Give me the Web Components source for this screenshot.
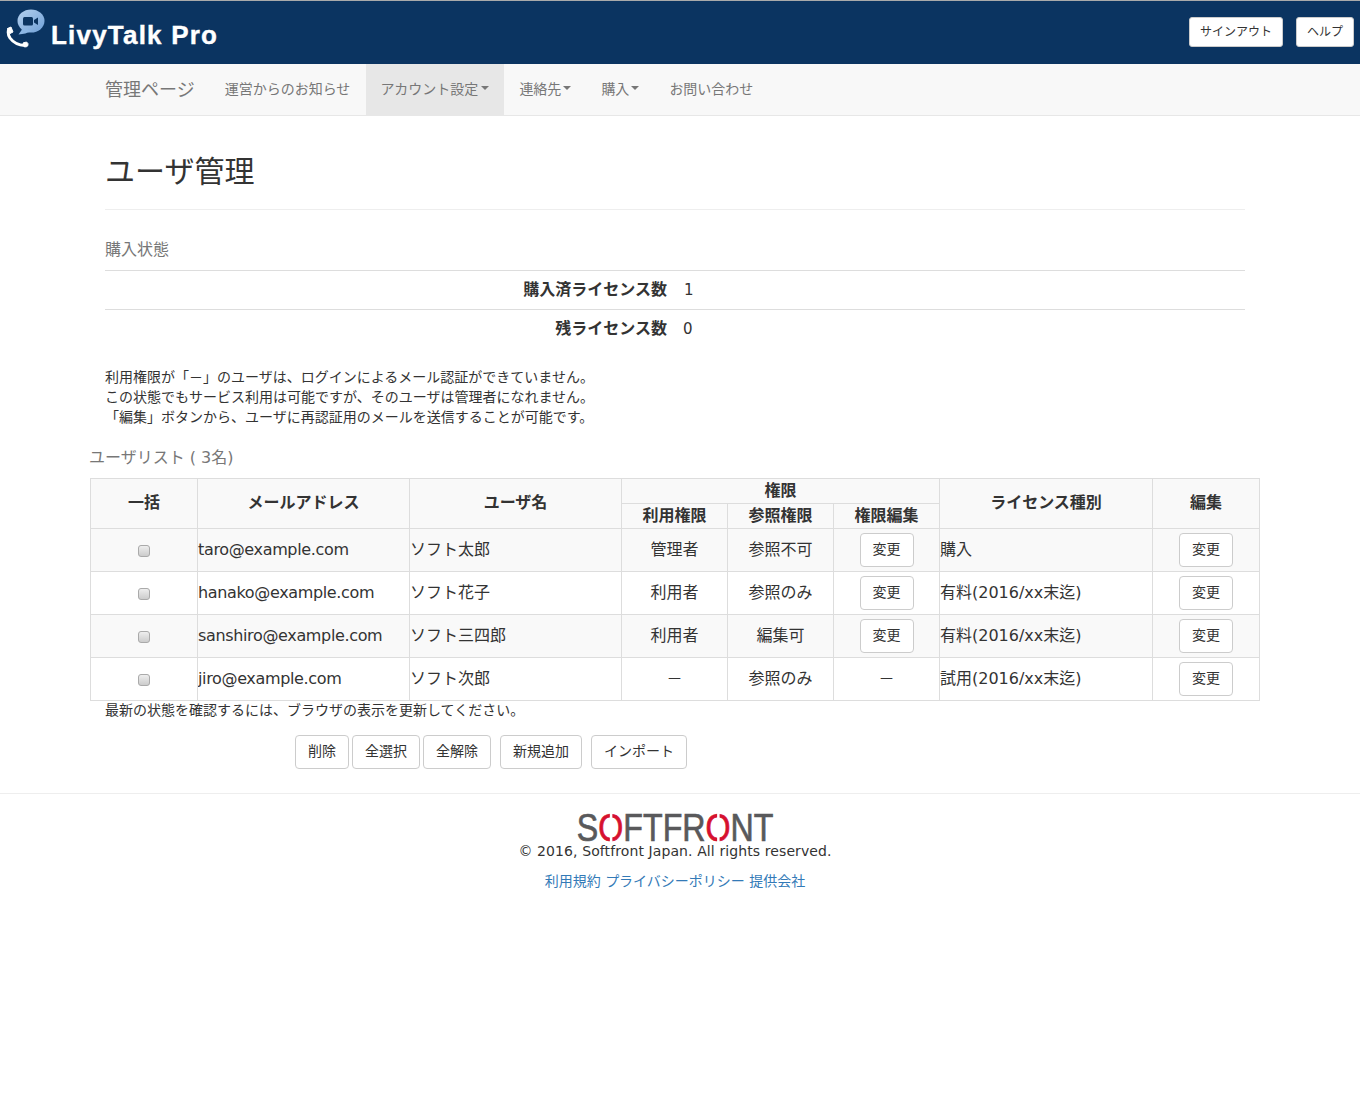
<!DOCTYPE html>
<html lang="ja"><head><meta charset="utf-8"><style>
html,body{margin:0;padding:0;background:#fff}
body{font-family:"DejaVu Sans","Noto Sans CJK JP",sans-serif;color:#333;font-size:14px}
</style></head><body>
<app-header></app-header>
<app-nav></app-nav>
<page-title>ユーザ管理</page-title>
<purchase-status></purchase-status>
<info-note></info-note>
<user-table></user-table>
<action-bar></action-bar>
<app-footer></app-footer>
<script>
const FONT='"DejaVu Sans","Noto Sans CJK JP",sans-serif';
function def(name,html){customElements.define(name,class extends HTMLElement{constructor(){super();this.attachShadow({mode:'open'}).innerHTML=html;}});}
def('ui-btn',`<style>:host{display:inline-block;vertical-align:middle}
button{display:block;font:14px ${FONT};color:#333;background:#fff;border:1px solid #ccc;border-radius:4px;height:34px;padding:0 12px 5px;white-space:nowrap;margin:0;box-sizing:border-box}</style><button><slot></slot></button>`);
def('app-header',`<style>:host{display:flex;align-items:center;justify-content:space-between;height:64px;box-sizing:border-box;background:#0b3461;border-top:1px solid #aaa;padding:0 6px}
.logo{display:flex;align-items:flex-start;height:100%;color:#fff}
svg{display:block;margin-top:3px}
.t{font:bold 26px "Liberation Sans",sans-serif;margin:19px 0 0 3px;letter-spacing:1.2px;white-space:nowrap;-webkit-text-stroke:.4px #fff}
.r{display:flex;gap:13px;margin-top:-1px}
.b{font:12px ${FONT};color:#333;background:#fff;border:1px solid #ccc;border-radius:3px;height:30px;padding:0 10px 3px;display:flex;align-items:center;box-sizing:border-box}</style>
<div class="logo"><svg width="42" height="44" viewBox="0 0 42 44">
<defs><linearGradient id="g" x1="0" y1="0" x2="1" y2="1"><stop offset="0" stop-color="#b5d1ef"/><stop offset="1" stop-color="#6f9fd6"/></linearGradient></defs>
<ellipse cx="25" cy="17" rx="13.5" ry="11.5" fill="url(#g)"/><path d="M17 24 L12.5 30.5 Q20 30 25 27Z" fill="#8db7e4"/>
<rect x="17" y="13" width="10" height="8.5" rx="1.5" fill="#0b3461"/><path d="M28 16 L32 13.5 V21 L28 18.5Z" fill="#0b3461"/>
<path d="M3 24.5 Q1 29 4 34 Q9 41 19 41.5" fill="none" stroke="#fff" stroke-width="3"/>
<path d="M1.5 24.5 L5 23 L7 28 L4 29.5Z M17 39 L20.5 38 Q22.5 39 22 41.5 Q21 43 18.5 43Z" fill="#fff" stroke="#fff" stroke-width="1" stroke-linejoin="round"/></svg>
<div class="t">LivyTalk Pro</div></div>
<div class="r"><div class="b">サインアウト</div><div class="b">ヘルプ</div></div>`);
def('app-nav',`<style>:host{display:flex;height:52px;box-sizing:border-box;background:#f8f8f8;border-bottom:1px solid #e7e7e7;padding:0 0 0 105px;font:14px ${FONT};color:#777}
a{display:flex;align-items:center;padding:0 15px 3px;white-space:nowrap;height:51px;box-sizing:border-box}
.brand{font-size:18px;padding:0 15px 4px 0}
.on{background:#e7e7e7;margin-left:1px;padding:0 15px 3px 14px}
.on i{margin-left:3px}
i{display:inline-block;border:4px solid transparent;border-top-color:#777;border-bottom:0;margin-left:2px}</style>
<a class="brand">管理ページ</a><a>運営からのお知らせ</a><a class="on">アカウント設定<i></i></a><a>連絡先<i></i></a><a>購入<i></i></a><a>お問い合わせ</a>`);
def('page-title',`<style>:host{display:block;margin:0 115px 0 105px;padding:38px 0 20px;border-bottom:1px solid #eee;font:30px/36px ${FONT};color:#333;height:94px;box-sizing:border-box}</style><slot></slot>`);
def('purchase-status',`<style>:host{display:block;margin:0 115px 0 105px;padding-top:26px}
.h{font:16px/27px ${FONT};color:#777;height:34px;box-sizing:border-box}
.row{display:grid;grid-template-columns:562px 1fr;column-gap:17px;border-top:1px solid #ddd;height:39px;box-sizing:border-box;align-items:center;font-size:15px;padding-bottom:4px}
b{text-align:right;color:#333;font-size:16px}
span{margin-top:3px}</style>
<div class="h">購入状態</div><div class="row"><b>購入済ライセンス数</b><span>1</span></div><div class="row"><b>残ライセンス数</b><span style="margin-left:-1px">0</span></div>`);
def('info-note',`<style>:host{display:block;margin:19px 115px 0 105px;font:14px/20px ${FONT};color:#333}</style>
利用権限が「－」のユーザは、ログインによるメール認証ができていません。<br>この状態でもサービス利用は可能ですが、そのユーザは管理者になれません。<br>「編集」ボタンから、ユーザに再認証用のメールを送信することが可能です。`);
const rows=[['taro@example.com','ソフト太郎','管理者','参照不可',1,'購入'],['hanako@example.com','ソフト花子','利用者','参照のみ',1,'有料(2016/xx末迄)'],['sanshiro@example.com','ソフト三四郎','利用者','編集可',1,'有料(2016/xx末迄)'],['jiro@example.com','ソフト次郎','－','参照のみ',0,'試用(2016/xx末迄)']];
def('user-table',`<style>:host{display:block;margin:0 100px 0 90px;color:#333}
.cap{font:16px/24px ${FONT};color:#777;margin:19px 0 8px -1px}
table{border-collapse:collapse;table-layout:fixed;width:1169px;font:16px/20px ${FONT}}
th,td{border:1px solid #ddd;padding:0;text-align:center;white-space:nowrap;overflow:hidden}
th{background:#f9f9f9;font-weight:bold;font-size:16px}
th[rowspan]{padding-bottom:2px}
thead tr:first-child{height:25px}
thead tr:nth-child(2){height:25px}
tbody tr{height:43px}
tbody tr:nth-child(odd){background:#f9f9f9}
.l{text-align:left}
.m{letter-spacing:-.35px}
.c{display:block;width:12px;height:12px;margin:2px auto 0;box-sizing:border-box;border:1px solid #aaa;border-radius:3px;background:linear-gradient(#eee,#ccc)}
</style><div class="cap">ユーザリスト ( 3名)</div>
<table><colgroup><col style="width:107px"><col style="width:212px"><col style="width:212px"><col style="width:106px"><col style="width:106px"><col style="width:106px"><col style="width:213px"><col style="width:107px"></colgroup>
<thead><tr><th rowspan="2">一括</th><th rowspan="2">メールアドレス</th><th rowspan="2">ユーザ名</th><th colspan="3">権限</th><th rowspan="2">ライセンス種別</th><th rowspan="2">編集</th></tr>
<tr><th>利用権限</th><th>参照権限</th><th>権限編集</th></tr></thead>
<tbody>${rows.map(r=>`<tr><td><span class="c"></span></td><td class="l m">${r[0]}</td><td class="l">${r[1]}</td><td>${r[2]}</td><td>${r[3]}</td><td>${r[4]?'<ui-btn>変更</ui-btn>':'－'}</td><td class="l">${r[5]}</td><td><ui-btn>変更</ui-btn></td></tr>`).join('')}</tbody></table>`);
def('action-bar',`<style>:host{display:block;margin:-1px 115px 0 105px;font:14px/20px ${FONT};color:#333}
.b{display:flex;margin:15px 0 0 190px;gap:3px}
ui-btn.g{margin-left:6px}</style>最新の状態を確認するには、ブラウザの表示を更新してください。
<div class="b"><ui-btn>削除</ui-btn><ui-btn>全選択</ui-btn><ui-btn>全解除</ui-btn><ui-btn class="g">新規追加</ui-btn><ui-btn class="g">インポート</ui-btn></div>`);
def('app-footer',`<style>:host{display:block;margin-top:24px;border-top:1px solid #eee;box-sizing:border-box;text-align:center;padding-top:16px}
.in{width:1350px}
.logo{height:31px;overflow:visible;white-space:nowrap}
.w{display:inline-block;font:39px/36px "Liberation Sans",sans-serif;color:#59595b;-webkit-text-stroke:.7px #59595b;transform:scaleX(.825);transform-origin:center}
.w span{color:#d6112f;-webkit-text-stroke:.7px #d6112f;position:relative;display:inline-block}
.w span::after{content:"";position:absolute;left:50%;top:0;bottom:0;width:3px;margin-left:-1.5px;background:#fff}
.c{font:14px/20px ${FONT};color:#333;letter-spacing:.1px}
.l{font:14px/20px ${FONT};color:#337ab7;margin-top:10px}</style>
<div class="in"><div class="logo"><div class="w">S<span>O</span>FTFR<span>O</span>NT</div></div><div class="c">© 2016, Softfront Japan. All rights reserved.</div><div class="l"><a>利用規約</a> <a>プライバシーポリシー</a> <a>提供会社</a></div></div>`);
</script></body></html>
